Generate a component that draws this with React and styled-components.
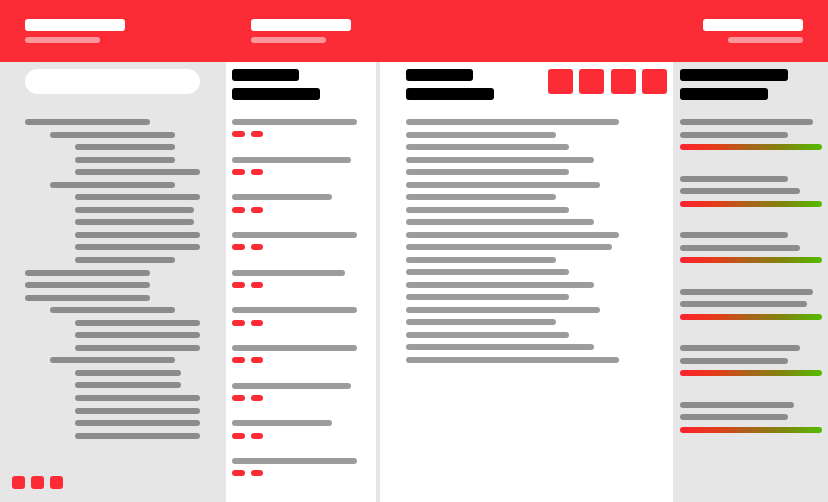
import React from "react";
import styled, { createGlobalStyle } from "styled-components";

const Global = createGlobalStyle`
  html, body { margin: 0; padding: 0; background: #e6e6e6; font-family: "Liberation Sans", Arial, sans-serif; }
  * { box-sizing: border-box; }
`;

const RED = "#fb2c36";

const Page = styled.div`
  width: 828px;
  height: 502px;
  display: flex;
  flex-direction: column;
  background: #e6e6e6;
  overflow: hidden;
`;

const Header = styled.header`
  height: 62px;
  flex: none;
  background: ${RED};
  display: flex;
`;

const HeaderBlock = styled.div`
  width: ${(p) => (p.$w ? `${p.$w}px` : "auto")};
  flex: ${(p) => (p.$w ? "none" : "1")};
  padding: 19px 25px 0 25px;
  display: flex;
  flex-direction: column;
  align-items: ${(p) => (p.$right ? "flex-end" : "flex-start")};
  gap: 6px;
`;

const HeadTitle = styled.div`
  width: 100px;
  height: 12px;
  border-radius: 3px;
  background: #fff;
`;

const HeadSub = styled.div`
  width: 75px;
  height: 6px;
  border-radius: 3px;
  background: #fd979c;
`;

const Body = styled.div`
  flex: 1;
  display: flex;
  min-height: 0;
`;

const Sidebar = styled.aside`
  width: 226px;
  flex: none;
  padding: 7px 0 0 25px;
  display: flex;
  flex-direction: column;
`;

const Search = styled.div`
  width: 175px;
  height: 25px;
  border-radius: 13px;
  background: #fff;
`;

const Tree = styled.div`
  margin-top: 25px;
  display: flex;
  flex-direction: column;
  gap: 6.55px;
`;

const TreeRow = styled.div`
  margin-left: ${(p) => p.$level * 25}px;
  width: ${(p) => p.$w}px;
  height: 6px;
  border-radius: 3px;
  background: #8c8c8c;
`;

const SideActions = styled.div`
  margin-top: auto;
  margin-left: -13px;
  margin-bottom: 12.7px;
  display: flex;
  gap: 6px;
`;

const SmallBtn = styled.div`
  width: 13px;
  height: 13px;
  border-radius: 3px;
  background: ${RED};
`;

const ListCol = styled.section`
  width: 150px;
  flex: none;
  background: #fff;
  margin-right: 4px;
  padding: 7px 0 0 6px;
  display: flex;
  flex-direction: column;
`;

const Titles = styled.div`
  display: flex;
  flex-direction: column;
  gap: 7px;
`;

const BlackBar = styled.div`
  width: ${(p) => p.$w}px;
  height: 12px;
  border-radius: 3px;
  background: #000;
`;

const Items = styled.div`
  margin-top: 19px;
  display: flex;
  flex-direction: column;
  gap: ${(p) => p.$gap}px;
`;

const ListItem = styled.div`
  display: flex;
  flex-direction: column;
  gap: 6.4px;
`;

const GrayBar = styled.div`
  width: ${(p) => p.$w}px;
  height: 6px;
  border-radius: 3px;
  background: ${(p) => p.$c || "#9c9c9c"};
`;

const Pills = styled.div`
  display: flex;
  gap: 6px;
`;

const Pill = styled.div`
  width: 12.7px;
  height: 6px;
  border-radius: 3px;
  background: ${RED};
`;

const Main = styled.main`
  width: 293px;
  flex: none;
  background: #fff;
  padding: 7px 6px 0 26px;
  display: flex;
  flex-direction: column;
`;

const MainTop = styled.div`
  display: flex;
  justify-content: space-between;
  align-items: flex-start;
`;

const Tools = styled.div`
  display: flex;
  gap: 6.3px;
`;

const ToolBtn = styled.div`
  width: 25px;
  height: 25px;
  border-radius: 3px;
  background: ${RED};
`;

const Lines = styled.div`
  margin-top: 19px;
  display: flex;
  flex-direction: column;
  gap: 6.5px;
`;

const RightCol = styled.aside`
  flex: 1;
  padding: 7px 0 0 7px;
  display: flex;
  flex-direction: column;
`;

const Metric = styled.div`
  display: flex;
  flex-direction: column;
  gap: 6.5px;
`;

const Gradient = styled.div`
  width: 142px;
  height: 6px;
  border-radius: 3px;
  background: linear-gradient(to right, #ff2030, #e23c1a 25%, #a6661a 50%, #7c8a0c 75%, #55bb00);
`;

const tree = [
  [0, 125], [1, 125], [2, 100], [2, 100], [2, 125], [1, 125], [2, 125], [2, 119],
  [2, 119], [2, 125], [2, 125], [2, 100], [0, 125], [0, 125], [0, 125], [1, 125],
  [2, 125], [2, 125], [2, 125], [1, 125], [2, 106], [2, 106], [2, 125], [2, 125],
  [2, 125], [2, 125],
];

const listWidths = [125, 119, 100, 125, 113, 125, 125, 119, 100, 125];

const mainWidths = [213, 150, 163, 188, 163, 194, 150, 163, 188, 213, 206, 150, 163, 188, 163, 194, 150, 163, 188, 213];

const metrics = [
  [133, 108], [108, 120], [108, 120], [133, 127], [120, 108], [114, 108],
];

export default function App() {
  return (
    <Page>
      <Global />
      <Header>
        <HeaderBlock $w={226}>
          <HeadTitle />
          <HeadSub />
        </HeaderBlock>
        <HeaderBlock>
          <HeadTitle />
          <HeadSub />
        </HeaderBlock>
        <HeaderBlock $right>
          <HeadTitle />
          <HeadSub />
        </HeaderBlock>
      </Header>
      <Body>
        <Sidebar>
          <Search />
          <Tree>
            {tree.map(([l, w], i) => (
              <TreeRow key={i} $level={l} $w={w} />
            ))}
          </Tree>
          <SideActions>
            <SmallBtn />
            <SmallBtn />
            <SmallBtn />
          </SideActions>
        </Sidebar>
        <ListCol>
          <Titles>
            <BlackBar $w={67} />
            <BlackBar $w={88} />
          </Titles>
          <Items $gap={19.27}>
            {listWidths.map((w, i) => (
              <ListItem key={i}>
                <GrayBar $w={w} />
                <Pills>
                  <Pill />
                  <Pill />
                </Pills>
              </ListItem>
            ))}
          </Items>
        </ListCol>
        <Main>
          <MainTop>
            <Titles>
              <BlackBar $w={67} />
              <BlackBar $w={88} />
            </Titles>
            <Tools>
              <ToolBtn />
              <ToolBtn />
              <ToolBtn />
              <ToolBtn />
            </Tools>
          </MainTop>
          <Lines>
            {mainWidths.map((w, i) => (
              <GrayBar key={i} $w={w} />
            ))}
          </Lines>
        </Main>
        <RightCol>
          <Titles>
            <BlackBar $w={108} />
            <BlackBar $w={88} />
          </Titles>
          <Items $gap={25.6}>
            {metrics.map(([a, b], i) => (
              <Metric key={i}>
                <GrayBar $w={a} $c="#8c8c8c" />
                <GrayBar $w={b} $c="#8c8c8c" />
                <Gradient />
              </Metric>
            ))}
          </Items>
        </RightCol>
      </Body>
    </Page>
  );
}
